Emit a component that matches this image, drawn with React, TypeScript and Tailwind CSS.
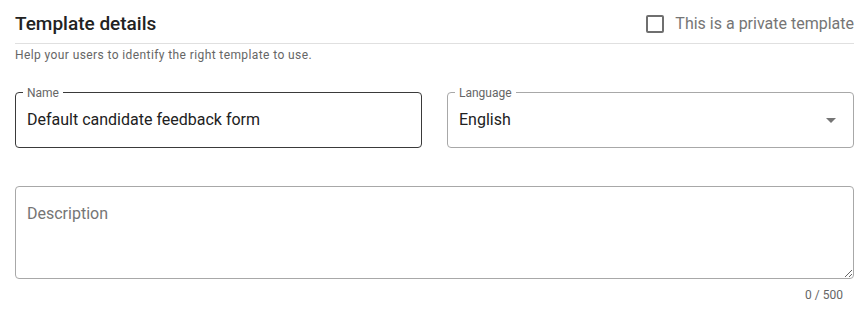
import React from "react";

function OutlinedField({
  label,
  value,
  dark,
  select,
}: {
  label: string;
  value: string;
  dark?: boolean;
  select?: boolean;
}) {
  return (
    <div
      className={
        "relative h-[56px] rounded-[4px] border flex items-center pl-[11px] pr-[17px] " +
        (dark ? "border-[#3a3a3a]" : "border-[#a8a8a8]")
      }
    >
      <span className="absolute -top-[7px] left-[7px] bg-white px-[4px] text-[12px] leading-[14px] text-[#666]">
        {label}
      </span>
      <span className="flex-1 text-[16px] text-[#212121]">{value}</span>
      {select && (
        <svg width="10" height="5" viewBox="0 0 10 5" className="mt-[1px]">
          <path d="M0 0h10L5 5z" fill="#757575" />
        </svg>
      )}
    </div>
  );
}

export default function App() {
  return (
    <div className="w-[868px] h-[310px] bg-white pl-[15px] pr-[14px] font-['Roboto',sans-serif]">
      <div className="flex items-center justify-between pt-[12px] pb-[7px] border-b border-[#e0e0e0]">
        <h2 className="text-[19px] leading-[24px] font-medium text-[#222]">Template details</h2>
        <label className="flex items-center gap-[11px] text-[16px] leading-[24px] text-[#757575]">
          <span className="w-[18px] h-[18px] rounded-[2px] border-2 border-[#6f6f6f]" />
          This is a private template
        </label>
      </div>
      <p className="mt-[3px] text-[12px] leading-[16px] tracking-[0.4px] text-[#666]">
        Help your users to identify the right template to use.
      </p>
      <div className="grid grid-cols-2 gap-[25px] mt-[29px]">
        <OutlinedField label="Name" value="Default candidate feedback form" dark />
        <OutlinedField label="Language" value="English" select />
      </div>
      <textarea
        placeholder="Description"
        className="block mt-[38px] w-full h-[93px] rounded-[4px] border border-[#a8a8a8] px-[11px] pt-[16px] text-[16px] leading-[22px] text-[#212121] placeholder:text-[#757575] outline-none resize-y font-['Roboto',sans-serif]"
      />
      <div className="mt-[9px] pr-[11px] text-right text-[12px] leading-[14px] text-[#666]">0 / 500</div>
    </div>
  );
}
